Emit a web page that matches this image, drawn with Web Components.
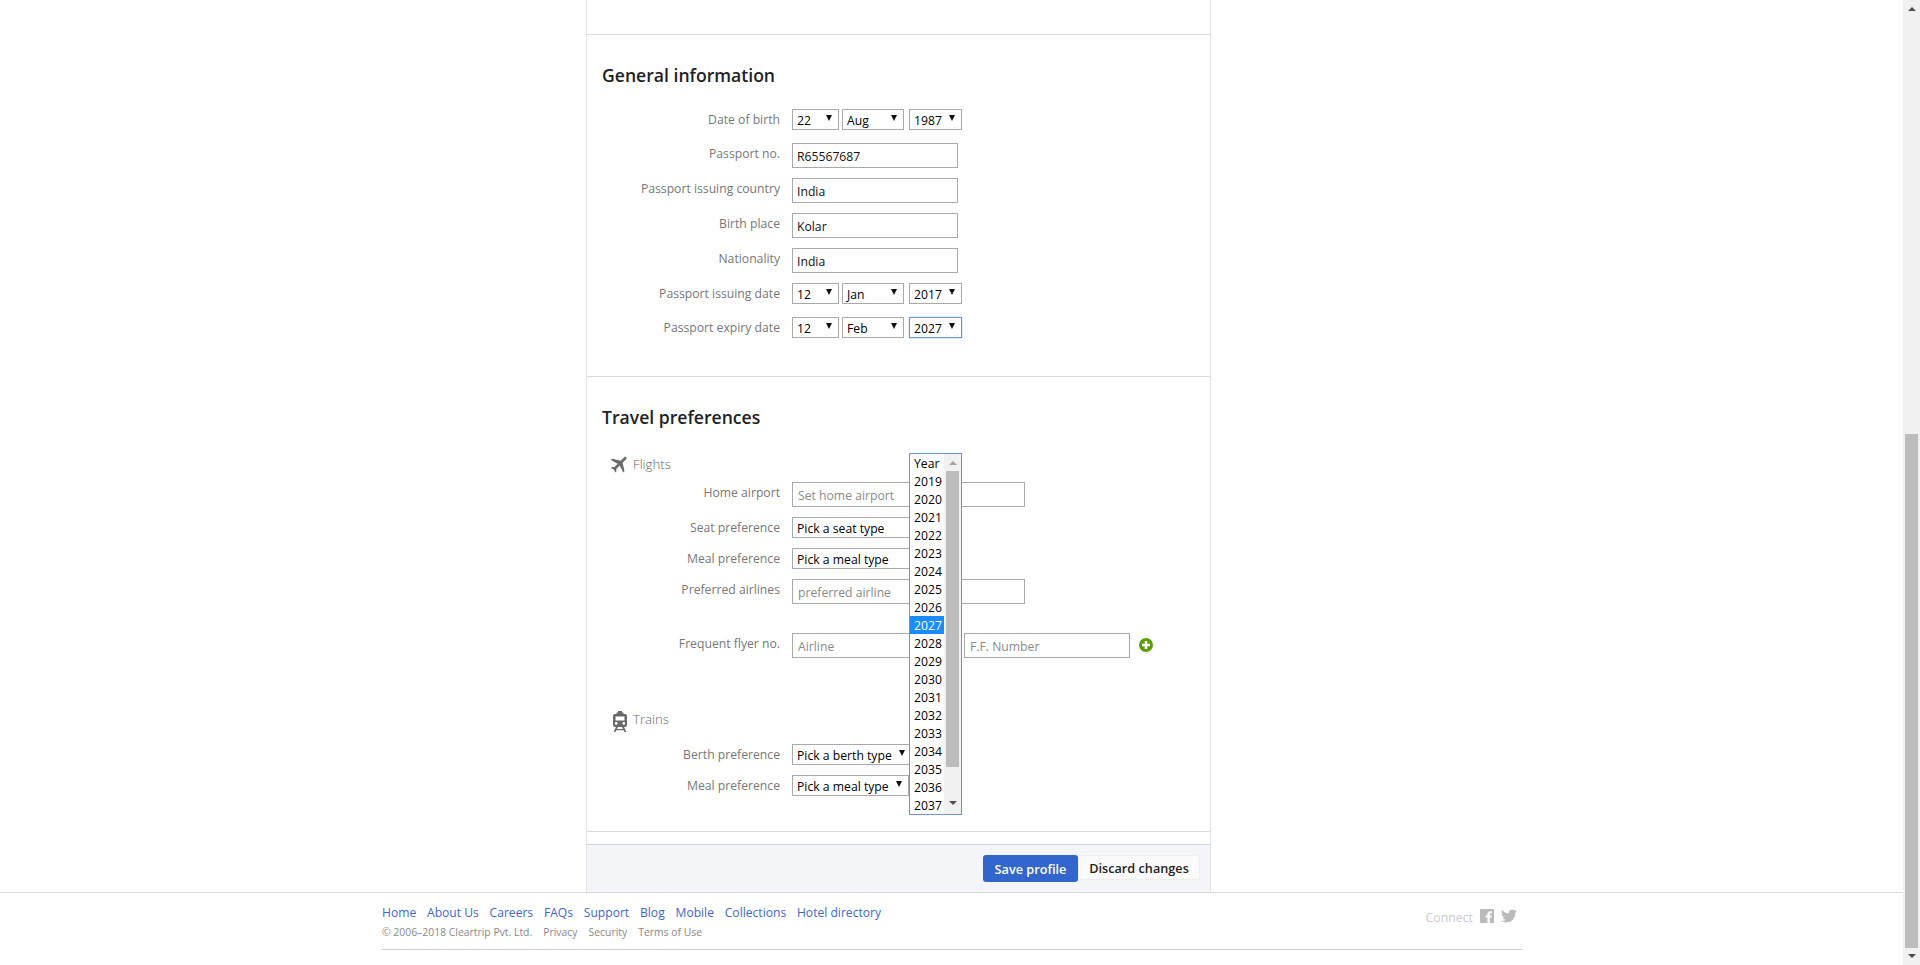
<!DOCTYPE html>
<html>
<head>
<meta charset="utf-8">
<title>Profile</title>
<style>
  html, body { margin: 0; height: 965px; overflow: hidden; background: #fff; }
  body { font-family: "Open Sans", "Noto Sans", sans-serif; font-size: 12px; color: #000; }
</style>
</head>
<body>
<ct-page>
  <ct-card>
    <ct-section heading="General information" first>
      <ct-row label="Date of birth">
        <ct-select value="22" width="47"></ct-select>
        <ct-select value="Aug" width="62"></ct-select>
        <ct-select value="1987" width="53"></ct-select>
      </ct-row>
      <ct-row label="Passport no." style="margin-top:13px"><ct-input value="R65567687"></ct-input></ct-row>
      <ct-row label="Passport issuing country"><ct-input value="India"></ct-input></ct-row>
      <ct-row label="Birth place"><ct-input value="Kolar"></ct-input></ct-row>
      <ct-row label="Nationality"><ct-input value="India"></ct-input></ct-row>
      <ct-row label="Passport issuing date">
        <ct-select value="12" width="47"></ct-select>
        <ct-select value="Jan" width="62"></ct-select>
        <ct-select value="2017" width="53"></ct-select>
      </ct-row>
      <ct-row label="Passport expiry date" style="margin-top:13px">
        <ct-select value="12" width="47"></ct-select>
        <ct-select value="Feb" width="62"></ct-select>
        <ct-select value="2027" width="53" focused><ct-year-list selected="2027"></ct-year-list></ct-select>
      </ct-row>
    </ct-section>
    <ct-section heading="Travel preferences">
      <ct-subhead label="Flights" icon="plane" style="margin-top:25px"></ct-subhead>
      <ct-row label="Home airport" style="margin-top:6px"><ct-input placeholder="Set home airport" width="233"></ct-input></ct-row>
      <ct-row label="Seat preference"><ct-select value="Pick a seat type" width="150"></ct-select></ct-row>
      <ct-row label="Meal preference"><ct-select value="Pick a meal type" width="150"></ct-select></ct-row>
      <ct-row label="Preferred airlines"><ct-input placeholder="preferred airline" width="233"></ct-input></ct-row>
      <ct-row label="Frequent flyer no." style="margin-top:29px">
        <ct-input placeholder="Airline"></ct-input>
        <ct-input placeholder="F.F. Number"></ct-input>
        <ct-add></ct-add>
      </ct-row>
      <ct-subhead label="Trains" icon="train" style="margin-top:51px"></ct-subhead>
      <ct-row label="Berth preference" style="margin-top:13px"><ct-select value="Pick a berth type" width="120"></ct-select></ct-row>
      <ct-row label="Meal preference"><ct-select value="Pick a meal type" width="117"></ct-select></ct-row>
    </ct-section>
    <ct-actions></ct-actions>
  </ct-card>
  <ct-footer></ct-footer>
</ct-page>

<script>
class CtPage extends HTMLElement {
  constructor() {
    super();
    this.attachShadow({ mode: "open" });
    this.shadowRoot.innerHTML = `
      <style>
        :host { display: flex; height: 965px; }
        .main { width: 1903px; }
        .bar { width: 17px; background: #f1f1f1; display: flex; flex-direction: column; align-items: center; }
        .thumb { width: 13px; height: 514px; margin-top: 434px; background: #bdbdbd; }
        .up, .down { width: 0; height: 0; border-left: 4px solid transparent; border-right: 4px solid transparent; }
        .up { border-bottom: 4px solid #505050; margin-top: 7px; margin-bottom: -11px; }
        .down { border-top: 4px solid #505050; margin-top: 6px; }
      </style>
      <div class="main"><slot></slot></div>
      <div class="bar"><div class="up"></div><div class="thumb"></div><div class="down"></div></div>
    `;
  }
}

class CtCard extends HTMLElement {
  constructor() {
    super();
    this.attachShadow({ mode: "open" });
    this.shadowRoot.innerHTML = `
      <style>
        :host {
          display: block;
          width: 623px;
          margin-left: 586px;
          height: 858px;
          padding-top: 34px;
          border-left: 1px solid #e2e2e2;
          border-right: 1px solid #e2e2e2;
        }
      </style>
      <slot></slot>
    `;
  }
}

class CtSection extends HTMLElement {
  constructor() {
    super();
    this.attachShadow({ mode: "open" });
    this.shadowRoot.innerHTML = `
      <style>
        :host { display: block; border-top: 1px solid #dcdcdc; padding: 28px 0 35px 0; }
        :host([first]) { padding-bottom: 38px; }
        h2 { margin: 0 0 22px 15px; font-size: 17.6px; line-height: 24px; font-weight: 600; color: #222; }
      </style>
      <h2></h2>
      <slot></slot>
    `;
  }
  connectedCallback() {
    const h2 = this.shadowRoot.querySelector("h2");
    h2.textContent = this.getAttribute("heading");
    if (!this.hasAttribute("first")) h2.style.marginBottom = "0";
  }
}

class CtSubhead extends HTMLElement {
  constructor() {
    super();
    this.attachShadow({ mode: "open" });
    this.shadowRoot.innerHTML = `
      <style>
        :host { display: flex; align-items: center; height: 22px; padding-left: 25px; }
        .icon { width: 16px; height: 22px; display: flex; align-items: center; justify-content: center; margin-right: 5px; }
        svg { display: block; flex: none; fill: #6a6a6a; }
        .label { font-size: 13.2px; font-weight: 300; color: #666; padding-bottom: 2px; }
      </style>
      <span class="icon"></span><span class="label"></span>
    `;
  }
  connectedCallback() {
    this.shadowRoot.querySelector(".label").textContent = this.getAttribute("label");
    const icon = this.shadowRoot.querySelector(".icon");
    if (this.getAttribute("icon") === "plane") {
      // nudged up a little, the glyph sits above the row centre
      icon.innerHTML = `<svg style="margin-bottom:3px" width="22" height="22" viewBox="0 0 24 24"><path transform="rotate(45 12 12)" d="M21 16v-2l-8-5V3.5c0-.83-.67-1.5-1.5-1.5S10 2.67 10 3.5V9l-8 5v2l8-2.5V19l-2 1.5V22l3.5-1 3.5 1v-1.5L13 19v-5.5l8 2.5z"/></svg>`;
    } else {
      icon.innerHTML = `<svg style="margin-top:3px" width="14" height="21" viewBox="0 0 14 21"><path d="M5 0h4v1.500h1.500V3H12a2 2 0 0 1 2 2v9a2 2 0 0 1-2 2H2a2 2 0 0 1-2-2V5a2 2 0 0 1 2-2h1.500V1.500H5zM2.500 5.500v4h9v-4zM3.200 11a1.400 1.400 0 1 0 0 2.800 1.400 1.400 0 0 0 0-2.800zm7.600 0a1.400 1.400 0 1 0 0 2.800 1.400 1.400 0 0 0 0-2.800z" fill-rule="evenodd"/><path d="M3 16h2l-2.600 5H.6zM9 16h2l2.400 5h-1.800z"/><rect x="2.800" y="18" width="8.400" height="1.200"/></svg>`;
    }
  }
}

class CtRow extends HTMLElement {
  constructor() {
    super();
    this.attachShadow({ mode: "open" });
    this.shadowRoot.innerHTML = `
      <style>
        :host { display: grid; grid-template-columns: 193px 1fr; column-gap: 12px; margin-top: 10px; }
        .label { text-align: right; font-size: 12.2px; line-height: 21px; color: #777; white-space: nowrap; }
        .controls { display: flex; align-items: flex-start; gap: 3px; }
        ::slotted(ct-select[width="62"]) { margin-right: 2px; }
        ::slotted(ct-input) { margin-right: 3px; }
      </style>
      <div class="label"></div>
      <div class="controls"><slot></slot></div>
    `;
  }
  connectedCallback() {
    this.shadowRoot.querySelector(".label").textContent = this.getAttribute("label");
  }
}

class CtSelect extends HTMLElement {
  constructor() {
    super();
    this.attachShadow({ mode: "open" });
    this.shadowRoot.innerHTML = `
      <style>
        :host {
          display: block;
          position: relative;
          height: 21px;
          box-sizing: border-box;
          border: 1px solid #a9a9a9;
          background: #fff;
          font-size: 12.2px;
          line-height: 21px;
          padding-left: 4px;
          color: #000;
          white-space: nowrap;
        }
        :host([focused]) { border-color: #6b94d8; box-shadow: 0 0 1px #6b94d8; }
        .arrow {
          position: absolute;
          right: 6px;
          top: 5px;
          width: 0;
          height: 0;
          border-left: 3px solid transparent;
          border-right: 3px solid transparent;
          border-top: 6px solid #111;
        }
      </style>
      <span class="value"></span><span class="arrow"></span><slot></slot>
    `;
  }
  connectedCallback() {
    this.shadowRoot.querySelector(".value").textContent = this.getAttribute("value");
    this.style.width = this.getAttribute("width") + "px";
  }
}

class CtInput extends HTMLElement {
  constructor() {
    super();
    this.attachShadow({ mode: "open" });
    this.shadowRoot.innerHTML = `
      <style>
        :host {
          display: block;
          height: 25px;
          width: 166px;
          box-sizing: border-box;
          border: 1px solid #a9a9a9;
          background: #fff;
          font-size: 12.2px;
          line-height: 25px;
          padding-left: 4px;
          color: #111;
          white-space: nowrap;
        }
        .ph { color: #8a8a8a; margin-left: 1px; }
      </style>
      <span></span>
    `;
  }
  connectedCallback() {
    const span = this.shadowRoot.querySelector("span");
    if (this.hasAttribute("value")) {
      span.textContent = this.getAttribute("value");
    } else {
      span.textContent = this.getAttribute("placeholder");
      span.className = "ph";
    }
    if (this.hasAttribute("width")) this.style.width = this.getAttribute("width") + "px";
  }
}

class CtAdd extends HTMLElement {
  constructor() {
    super();
    this.attachShadow({ mode: "open" });
    this.shadowRoot.innerHTML = `
      <style>
        :host { display: block; margin: 5px 0 0 3px; width: 14px; height: 14px; }
        svg { display: block; }
      </style>
      <svg width="14" height="14" viewBox="0 0 14 14"><circle cx="7" cy="7" r="7" fill="#5a9e0a"/><path d="M5.700 3h2.600v2.700H11v2.600H8.300V11H5.700V8.300H3V5.700h2.700z" fill="#fff"/></svg>
    `;
  }
}

class CtYearList extends HTMLElement {
  constructor() {
    super();
    this.attachShadow({ mode: "open" });
    this.shadowRoot.innerHTML = `
      <style>
        :host {
          position: absolute;
          left: -1px;
          top: 135px;
          width: 53px;
          height: 362px;
          box-sizing: border-box;
          border: 1px solid #6b94d8;
          background: #fff;
          display: flex;
          z-index: 10;
          font-size: 12.2px;
          color: #000;
        }
        .items { flex: 1; }
        .item { height: 18px; line-height: 20px; padding-left: 4px; }
        .item.on { background: #1a8cff; color: #fff; }
        .track { width: 17px; background: #f1f1f1; display: flex; flex-direction: column; align-items: center; }
        .thumb { width: 13px; height: 296px; margin-top: 17px; background: #bdbdbd; }
        .up, .down { width: 0; height: 0; border-left: 4px solid transparent; border-right: 4px solid transparent; }
        .up { border-bottom: 4px solid #a3a3a3; margin-top: 7px; margin-bottom: -11px; }
        .down { border-top: 4px solid #505050; margin-top: 34px; }
      </style>
      <div class="items"></div>
      <div class="track"><div class="up"></div><div class="thumb"></div><div class="down"></div></div>
    `;
  }
  connectedCallback() {
    const selected = this.getAttribute("selected");
    let html = '<div class="item">Year</div>';
    for (let y = 2019; y <= 2037; y++) {
      html += `<div class="item${String(y) === selected ? " on" : ""}">${y}</div>`;
    }
    this.shadowRoot.querySelector(".items").innerHTML = html;
  }
}

class CtActions extends HTMLElement {
  constructor() {
    super();
    this.attachShadow({ mode: "open" });
    this.shadowRoot.innerHTML = `
      <style>
        :host {
          display: flex;
          border-top: 1px solid #dcdcdc;
          padding-top: 12px;
        }
        .bar {
          flex: 1;
          display: flex;
          justify-content: flex-end;
          align-items: flex-start;
          height: 48px;
          box-sizing: border-box;
          border-top: 1px solid #c9d8e6;
          background: #f3f5f9;
          padding: 10px 10px 0 0;
        }
        button { font: inherit; font-size: 12.7px; font-weight: 600; margin: 0; padding: 0; cursor: pointer; }
        .save { width: 95px; height: 27px; border: 0; border-radius: 3px; background: #3366cc; color: #fff; }
        .discard { width: 122px; height: 25px; border: 1px solid #eee; border-radius: 0 3px 3px 0; background: #fbfbfb; color: #222; }
      </style>
      <div class="bar"><button class="save">Save profile</button><button class="discard">Discard changes</button></div>
    `;
  }
}

class CtFooter extends HTMLElement {
  constructor() {
    super();
    this.attachShadow({ mode: "open" });
    this.shadowRoot.innerHTML = `
      <style>
        :host { display: block; border-top: 1px solid #dcdcdc; padding-left: 382px; }
        .inner { width: 1135px; padding-right: 5px; height: 46px; border-bottom: 1px solid #ccc; padding-top: 10px; display: flex; justify-content: space-between; }
        nav { display: flex; gap: 10.800px; font-size: 12.1px; line-height: 20px; }
        a { color: #3f66cc; text-decoration: none; }
        .legal { display: flex; gap: 11px; font-size: 10.4px; line-height: 16px; margin-top: 1px; color: #888; }
        .connect { display: flex; align-items: flex-start; gap: 7px; margin-top: 6px; color: #ccc; font-size: 12.3px; line-height: 18px; }
        .connect svg { display: block; fill: #bbb; }
      </style>
      <div class="inner">
        <div>
          <nav>
            <a href="#">Home</a><a href="#">About Us</a><a href="#">Careers</a><a href="#">FAQs</a><a href="#">Support</a><a href="#">Blog</a><a href="#">Mobile</a><a href="#">Collections</a><a href="#">Hotel directory</a>
          </nav>
          <div class="legal"><span>© 2006–2018 Cleartrip Pvt. Ltd.</span><span>Privacy</span><span>Security</span><span>Terms of Use</span></div>
        </div>
        <div class="connect">
          <span>Connect</span>
          <svg width="14" height="14" viewBox="0 0 14 14"><path fill-rule="evenodd" d="M1 0h12a1 1 0 0 1 1 1v12a1 1 0 0 1-1 1H9.700V8.600h1.800l.3-2.100H9.700V5.200c0-.6.2-1 1-1h1.200V2.300c-.2 0-.9-.1-1.700-.1-1.700 0-2.800 1-2.800 2.900v1.400H5.600v2.100h1.800V14H1a1 1 0 0 1-1-1V1a1 1 0 0 1 1-1z"/></svg>
          <svg width="16" height="14" viewBox="0 0 24 20"><path transform="translate(0 -2)" d="M23.953 4.570a10 10 0 01-2.825.775 4.958 4.958 0 002.163-2.723c-.951.555-2.005.959-3.127 1.184a4.920 4.920 0 00-8.384 4.482C7.690 8.095 4.067 6.130 1.640 3.162a4.822 4.822 0 00-.666 2.475c0 1.710.870 3.213 2.188 4.096a4.904 4.904 0 01-2.228-.616v.060a4.923 4.923 0 003.946 4.827 4.996 4.996 0 01-2.212.085 4.936 4.936 0 004.604 3.417 9.867 9.867 0 01-6.102 2.105c-.390 0-.779-.023-1.170-.067a13.995 13.995 0 007.557 2.209c9.053 0 13.998-7.496 13.998-13.985 0-.210 0-.420-.015-.630A9.935 9.935 0 0024 4.590z"/></svg>
        </div>
      </div>
    `;
  }
}

customElements.define("ct-page", CtPage);
customElements.define("ct-card", CtCard);
customElements.define("ct-section", CtSection);
customElements.define("ct-subhead", CtSubhead);
customElements.define("ct-row", CtRow);
customElements.define("ct-select", CtSelect);
customElements.define("ct-input", CtInput);
customElements.define("ct-add", CtAdd);
customElements.define("ct-year-list", CtYearList);
customElements.define("ct-actions", CtActions);
customElements.define("ct-footer", CtFooter);
</script>
</body>
</html>
